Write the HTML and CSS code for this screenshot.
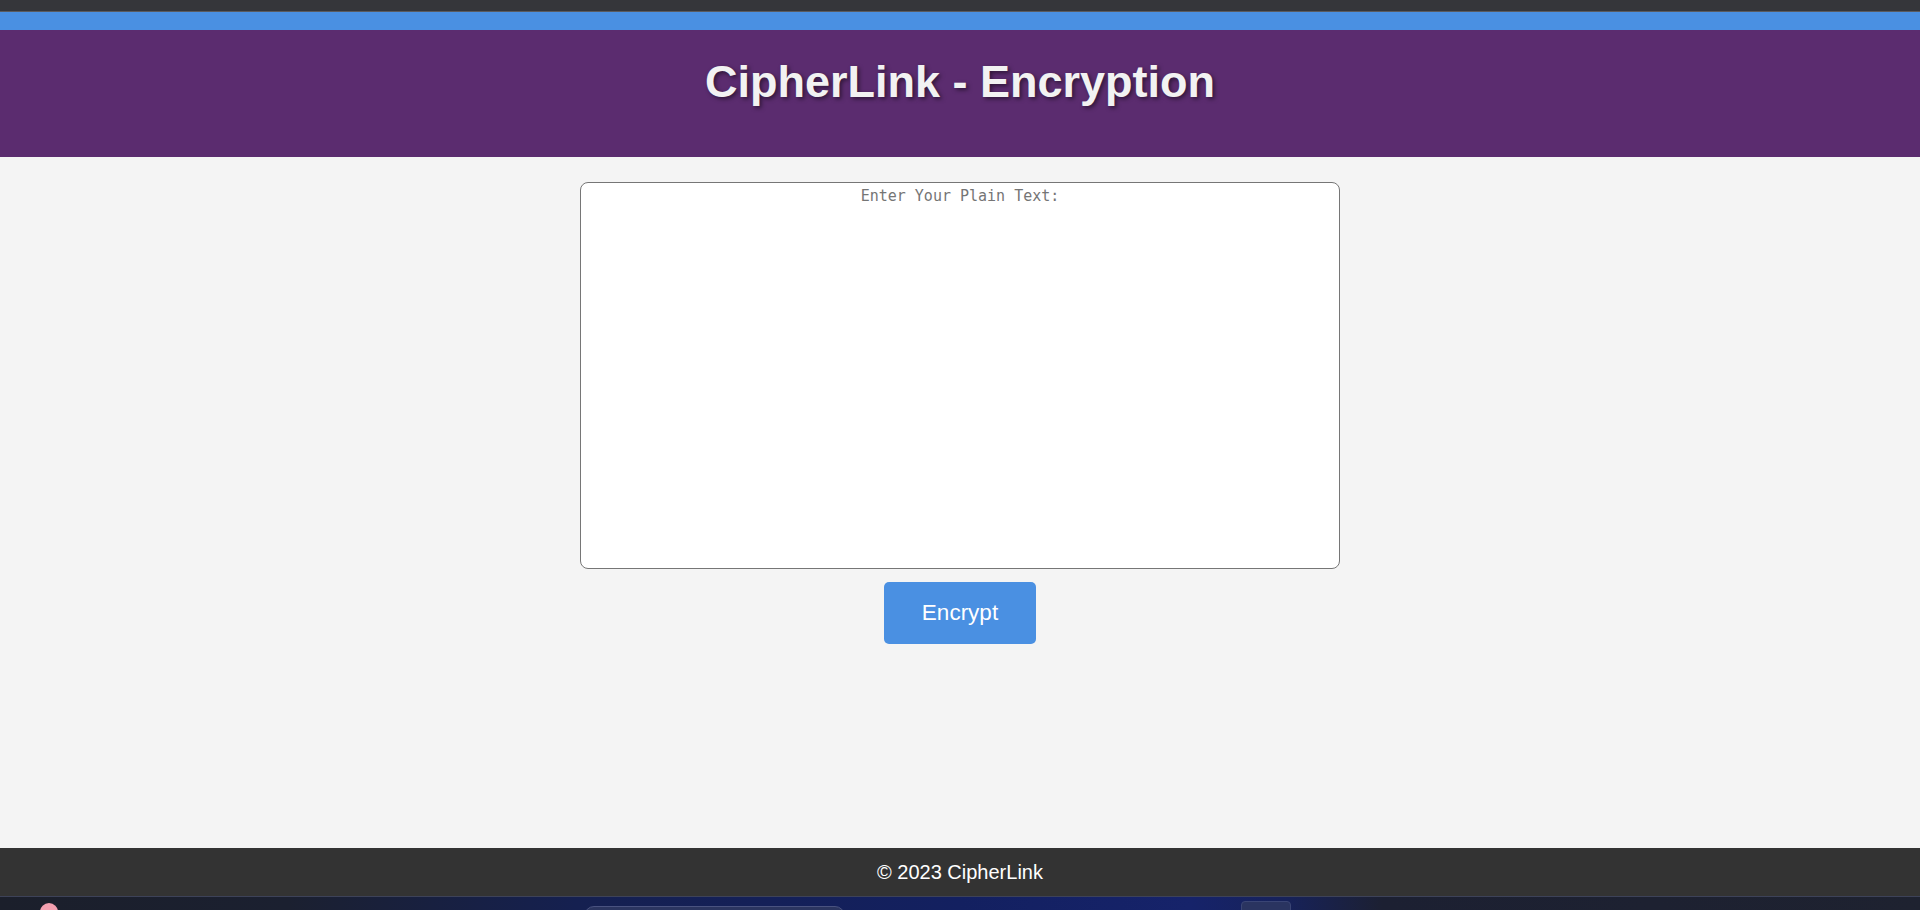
FILE: index.html
```html
<!DOCTYPE html>
<html lang="en">
<head>
<meta charset="utf-8">
<title>CipherLink - Encryption</title>
<link rel="stylesheet" href="styles.css">
</head>
<body>
<div class="chrome"></div>
<div class="accent"></div>
<header class="site-header">
  <h1 class="title">CipherLink - Encryption</h1>
</header>
<main class="main">
  <form class="enc-form">
    <textarea class="plain" placeholder="Enter Your Plain Text:"></textarea>
    <button type="button" class="btn">Encrypt</button>
  </form>
</main>
<footer class="site-footer">&copy; 2023 CipherLink</footer>
<div class="taskbar">
  <span class="tb-dot"></span>
  <span class="tb-search"></span>
  <span class="tb-app"></span>
</div>
</body>
</html>
```
FILE: styles.css
```css
html, body {
  margin: 0;
  padding: 0;
}
body {
  height: 910px;
  overflow: hidden;
  display: flex;
  flex-direction: column;
  background: #f4f4f4;
  font-family: "Liberation Sans", Arial, sans-serif;
}
.chrome {
  height: 11px;
  background: #35363a;
  border-bottom: 1px solid #5a5b5f;
  flex: none;
}
.accent {
  height: 18px;
  background: #4a90e2;
  flex: none;
}
.site-header {
  flex: none;
  height: 127px;
  box-sizing: border-box;
  background: #5b2c6f;
  padding-top: 26px;
}
.title {
  margin: 0;
  text-align: center;
  color: #f2f2f2;
  font-size: 45px;
  font-weight: bold;
  line-height: 52px;
  text-shadow: 2px 2px 4px rgba(0, 0, 0, 0.5);
}
.main {
  flex: 1;
  display: flex;
  justify-content: center;
  padding-top: 25px;
}
.enc-form {
  display: flex;
  flex-direction: column;
  align-items: center;
  gap: 13px;
}
.plain {
  width: 760px;
  height: 387px;
  box-sizing: border-box;
  border: 1px solid #767676;
  border-radius: 8px;
  background: #fff;
  padding: 4px;
  resize: none;
  text-align: center;
  font-family: "DejaVu Sans Mono", "Liberation Mono", monospace;
  font-size: 15px;
  outline: none;
}
.plain::placeholder {
  color: #757575;
}
.btn {
  width: 152px;
  height: 62px;
  border: none;
  border-radius: 5px;
  background: #4a90e2;
  color: #fff;
  font-family: "Liberation Sans", Arial, sans-serif;
  font-size: 22.5px;
  cursor: pointer;
}
.site-footer {
  flex: none;
  height: 48px;
  background: #333;
  color: #fff;
  font-size: 20px;
  display: flex;
  align-items: center;
  justify-content: center;
}
.taskbar {
  flex: none;
  height: 14px;
  box-sizing: border-box;
  border-top: 1px solid #3d4258;
  background: linear-gradient(90deg, #1b1f2b 0%, #1b2030 15%, #152050 30%, #132060 50%, #16236a 62%, #17225a 67%, #1c2032 72%, #1e2230 100%);
  position: relative;
  overflow: hidden;
}
.tb-dot {
  position: absolute;
  left: 40px;
  top: 6px;
  width: 18px;
  height: 18px;
  border-radius: 50%;
  background: #f4a0b0;
}
.tb-search {
  position: absolute;
  left: 584px;
  top: 9px;
  width: 259px;
  height: 20px;
  border-radius: 10px;
  background: #2b3560;
  border: 1px solid #4a5380;
}
.tb-app {
  position: absolute;
  left: 1241px;
  top: 4px;
  width: 48px;
  height: 20px;
  border-radius: 4px;
  background: #2a3460;
  border: 1px solid #3a4575;
}
```
